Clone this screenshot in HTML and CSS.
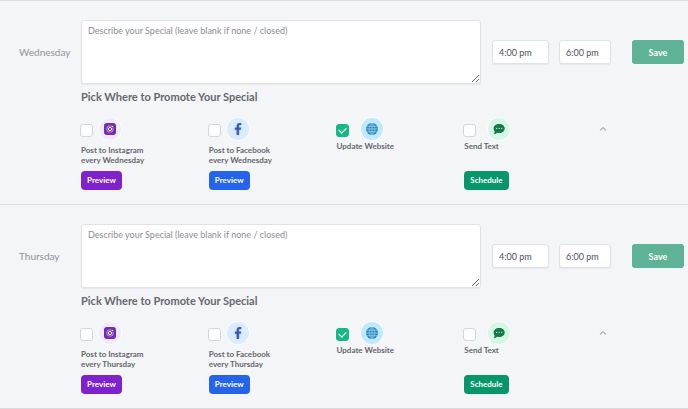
FILE: index.html
```html
<!DOCTYPE html>
<html lang="en">
<head>
<meta charset="utf-8">
<title>Weekly Specials</title>
<link rel="stylesheet" href="styles.css">
</head>
<body>
<svg class="sprite" aria-hidden="true">
  <symbol id="instagram" viewBox="0 0 12 12">
    <rect width="12" height="12" rx="3" fill="#7629b5"/>
    <path d="M7.500 3H5a2 2 0 0 0-2 2v2a2 2 0 0 0 2 2h2a2 2 0 0 0 2-2V4.800" fill="none" stroke="#e3ccf7" stroke-width=".7"/>
    <circle cx="6" cy="6" r="1.600" fill="none" stroke="#fff" stroke-width="1"/>
    <circle cx="8.500" cy="3.500" r=".8" fill="#fff"/>
  </symbol>
  <symbol id="facebook" viewBox="0 0 12 12">
    <path d="M4.800 12V6.800H3V4.700h1.800V3.200C4.800 1.100 5.900 0 7.700 0c.6 0 1 .05 1.400.1v1.900H8c-.9 0-1.100.5-1.100 1.200v1.500h2.100l-.3 2.100H6.900V12z" fill="#3b5bb0" stroke="#3b5bb0" stroke-width=".4"/>
  </symbol>
  <symbol id="globe" viewBox="0 0 12 12">
    <circle cx="6" cy="6" r="6" fill="#2583bd"/>
    <path d="M6 0v12M0 6h12M1 3.300h10M1 8.700h10M6 .3C2.200 3.500 2.200 8.500 6 11.700M6 .3c3.800 3.200 3.800 8.200 0 11.400" fill="none" stroke="#b9e6fb" stroke-width=".6"/>
  </symbol>
  <symbol id="chat" viewBox="0 0 12 12">
    <path d="M6.200 1C9.400 1 11.700 2.900 11.700 5.500S9.400 10 6.200 10c-.7 0-1.300-.1-1.900-.3C3.300 10.500 2 11 .6 11c.6-.7 1-1.500 1.100-2.300C1 7.800.6 6.700.6 5.500.6 2.900 3 1 6.200 1z" fill="#137a4b"/>
    <circle cx="3.600" cy="5.400" r=".6" fill="#c9f2dc"/><circle cx="6.200" cy="5.400" r=".6" fill="#c9f2dc"/><circle cx="8.800" cy="5.400" r=".6" fill="#c9f2dc"/>
  </symbol>
  <symbol id="chevron" viewBox="0 0 8 8">
    <path d="M1 5.500 4 2.500l3 3" fill="none" stroke="#adb0b5" stroke-width="1.200"/>
  </symbol>
</svg>

<main>
  <section class="day">
    <label class="day-name" for="wed-text">Wednesday</label>
    <textarea id="wed-text" class="field" placeholder="Describe your Special (leave blank if none / closed)"></textarea>
    <input class="field time start" type="text" value="4:00 pm" aria-label="Wednesday start time">
    <input class="field time" type="text" value="6:00 pm" aria-label="Wednesday end time">
    <button class="save" type="button">Save</button>
    <div class="promote">
      <h2>Pick Where to Promote Your Special</h2>
      <div class="options">
        <div class="option">
          <div class="pick"><input type="checkbox" id="wed-ig"><span class="badge violet"><svg><use href="#instagram"/></svg></span></div>
          <label class="two-line" for="wed-ig">Post to Instagram<br>every Wednesday</label>
          <button class="action violet" type="button">Preview</button>
        </div>
        <div class="option">
          <div class="pick"><input type="checkbox" id="wed-fb"><span class="badge blue"><svg><use href="#facebook"/></svg></span></div>
          <label class="two-line" for="wed-fb">Post to Facebook<br>every Wednesday</label>
          <button class="action blue" type="button">Preview</button>
        </div>
        <div class="option">
          <div class="pick wide"><input type="checkbox" id="wed-web" checked><span class="badge sky"><svg><use href="#globe"/></svg></span></div>
          <label for="wed-web">Update Website</label>
        </div>
        <div class="option">
          <div class="pick wide"><input type="checkbox" id="wed-sms"><span class="badge green"><svg><use href="#chat"/></svg></span></div>
          <label for="wed-sms">Send Text</label>
          <button class="action green" type="button">Schedule</button>
        </div>
        <button class="collapse" type="button" aria-label="Collapse Wednesday"><svg><use href="#chevron"/></svg></button>
      </div>
    </div>
  </section>

  <section class="day">
    <label class="day-name" for="thu-text">Thursday</label>
    <textarea id="thu-text" class="field" placeholder="Describe your Special (leave blank if none / closed)"></textarea>
    <input class="field time start" type="text" value="4:00 pm" aria-label="Thursday start time">
    <input class="field time" type="text" value="6:00 pm" aria-label="Thursday end time">
    <button class="save" type="button">Save</button>
    <div class="promote">
      <h2>Pick Where to Promote Your Special</h2>
      <div class="options">
        <div class="option">
          <div class="pick"><input type="checkbox" id="thu-ig"><span class="badge violet"><svg><use href="#instagram"/></svg></span></div>
          <label class="two-line" for="thu-ig">Post to Instagram<br>every Thursday</label>
          <button class="action violet" type="button">Preview</button>
        </div>
        <div class="option">
          <div class="pick"><input type="checkbox" id="thu-fb"><span class="badge blue"><svg><use href="#facebook"/></svg></span></div>
          <label class="two-line" for="thu-fb">Post to Facebook<br>every Thursday</label>
          <button class="action blue" type="button">Preview</button>
        </div>
        <div class="option">
          <div class="pick wide"><input type="checkbox" id="thu-web" checked><span class="badge sky"><svg><use href="#globe"/></svg></span></div>
          <label for="thu-web">Update Website</label>
        </div>
        <div class="option">
          <div class="pick wide"><input type="checkbox" id="thu-sms"><span class="badge green"><svg><use href="#chat"/></svg></span></div>
          <label for="thu-sms">Send Text</label>
          <button class="action green" type="button">Schedule</button>
        </div>
        <button class="collapse" type="button" aria-label="Collapse Thursday"><svg><use href="#chevron"/></svg></button>
      </div>
    </div>
  </section>
</main>
</body>
</html>
```
FILE: styles.css
```css
* {
  box-sizing: border-box;
}

body {
  margin: 0;
  background: #f4f5f7;
  color: #66676e;
  font-family: Lato, "Liberation Sans", sans-serif;
}

button,
input,
textarea {
  margin: 0;
  font-family: inherit;
}

.sprite {
  position: absolute;
  width: 0;
  height: 0;
}

main {
  border-bottom: 1px solid #d9dbde;
}

.day {
  display: grid;
  grid-template-columns: 62px minmax(0, 1fr) 68px 62px 73px;
  align-items: center;
  padding: 19px 4px 13px 19px;
  border-top: 1px solid #dcdee0;
}

.day-name {
  font-size: 10px;
  line-height: 12px;
  color: #919297;
}

.field {
  border: 1px solid #dfe1e6;
  border-radius: 3px;
  background: #fff;
  box-shadow: 0 1px 1px #e6e8eb;
  font-size: 9px;
  line-height: 12px;
  color: #4e4f5a;
}

textarea.field {
  display: block;
  width: 100%;
  height: 64px;
  padding: 4px 6px;
  resize: both;
}

textarea::placeholder {
  color: #8c8d93;
}

.time {
  height: 24px;
  margin-left: 10px;
  padding: 0 6px;
  min-width: 0;
}

.time.start {
  margin-left: 11px;
}

.save {
  height: 24px;
  margin-left: 21px;
  padding: 0;
  border: 0;
  border-radius: 3px;
  background: #5eb396;
  color: #fff;
  font-size: 9px;
  font-weight: 700;
}

.promote {
  grid-column: 2 / -1;
}

h2 {
  margin: 6px 0 14px;
  font-size: 11px;
  line-height: 14px;
  font-weight: 700;
}

.options {
  display: grid;
  grid-template-columns: repeat(4, minmax(0, 1fr)) 92px;
}

.option {
  display: flex;
  flex-direction: column;
  align-items: flex-start;
  height: 72px;
  margin-bottom: 1px;
}

.pick {
  display: flex;
  align-items: center;
  gap: 6px;
  margin-left: -1px;
}

.pick.wide {
  gap: 12px;
}

.pick input {
  appearance: none;
  width: 13px;
  height: 13px;
  margin-top: 2px;
  border: 1px solid #d5d6d9;
  border-radius: 3px;
  background: #fff;
}

.pick input:checked {
  display: grid;
  place-items: center;
  border-color: #18b886;
  background: #18b886;
}

.pick input:checked::after {
  content: "";
  width: 6px;
  height: 4px;
  border: solid #fff;
  border-width: 0 0 1px 1px;
  transform: translateY(-1px) rotate(-45deg);
}

.badge {
  display: grid;
  place-items: center;
  width: 22px;
  height: 22px;
  border-radius: 50%;
  box-shadow: 0 0 0 1px #fafbfc;
}

.badge svg {
  width: 12px;
  height: 12px;
}

.badge.violet { background: #efebff; }
.badge.blue { background: #d8ebff; }
.badge.sky { background: #bfe9ff; }
.badge.green { background: #d7f7e5; }

.option label {
  margin-top: 1px;
  font-size: 8px;
  line-height: 10px;
  font-weight: 700;
}

.option .two-line {
  margin-top: 5px;
}

.action {
  height: 19px;
  margin-top: auto;
  padding: 0 6px 1px;
  border: 0;
  border-radius: 4px;
  color: #fff;
  font-size: 8px;
  line-height: 10px;
  font-weight: 700;
}

.action.violet { background: #7e22ce; }
.action.blue { background: #2563eb; }
.action.green { background: #079669; }

.collapse {
  justify-self: start;
  align-self: start;
  margin: 7px 0 0 7px;
  padding: 0;
  border: 0;
  background: none;
}

.collapse svg {
  display: block;
  width: 8px;
  height: 8px;
}
```
